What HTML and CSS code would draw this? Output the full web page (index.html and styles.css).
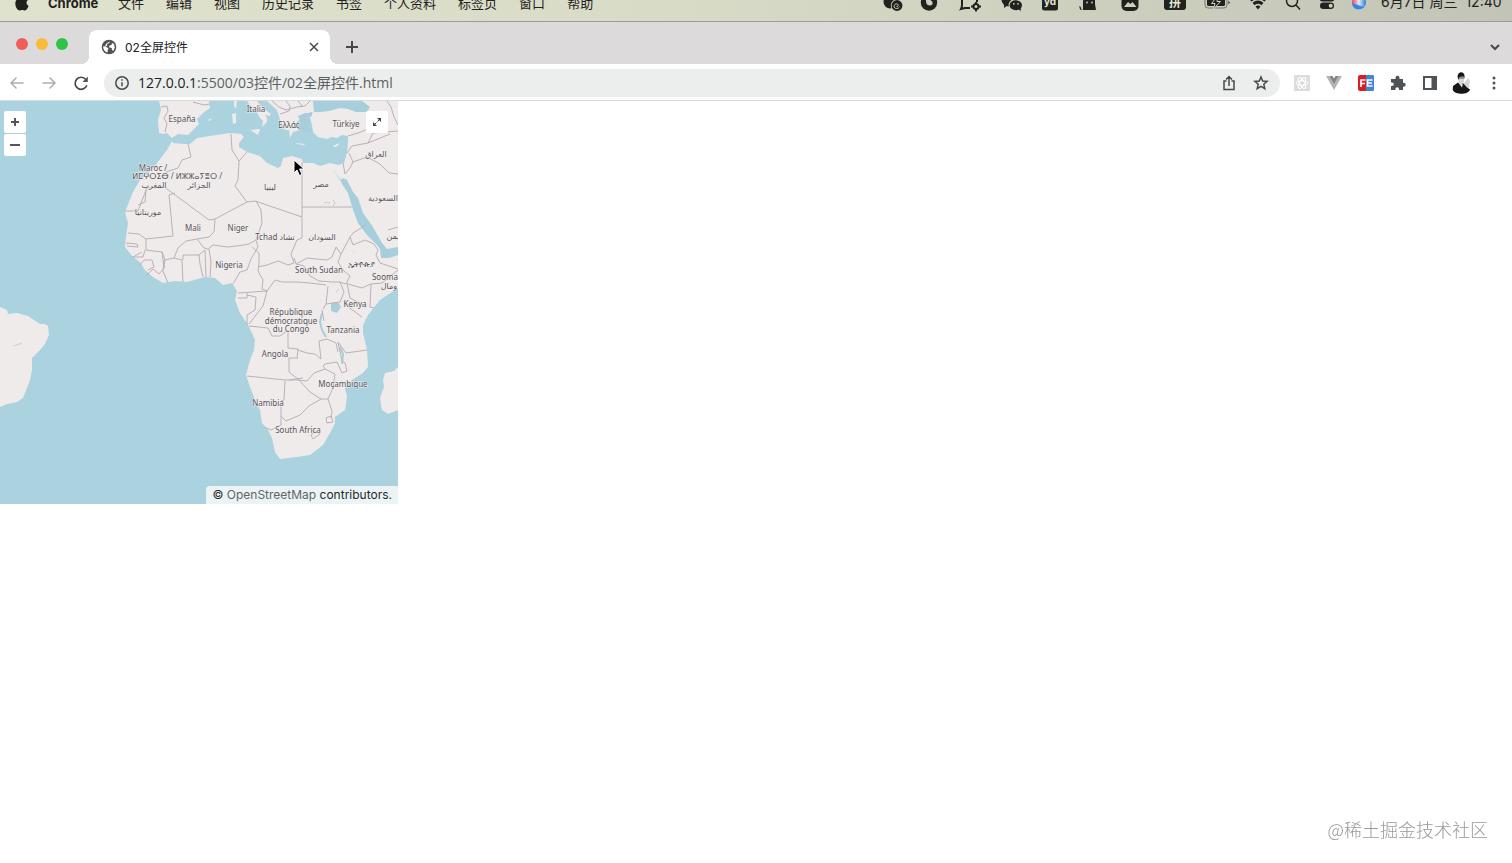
FILE: index.html
```html
<!DOCTYPE html>
<html lang="zh-CN">
<head>
<meta charset="utf-8">
<title>02全屏控件</title>
<link rel="stylesheet" href="styles.css">
</head>
<body>
<header class="menubar">
  <nav class="menus">
    <svg class="apple" viewBox="0 0 14 18" width="14" height="18"><path d="M9.500 0C9.600 2 8 3.800 6.600 3.700 6.400 2 8 .3 9.500 0zM12.800 6.200C11 7.300 11 10.700 13.600 11.800 12.800 14 11.500 16.500 9.900 16.500 8.900 16.500 8.400 15.900 7.200 15.900S5.500 16.500 4.500 16.500C2.500 16.500.3 12.800.3 9.500.3 6.200 2.300 4.500 4.300 4.500 5.500 4.500 6.300 5.200 7.200 5.200S9 4.400 10.400 4.500C11.300 4.500 12.200 5.200 12.800 6.200z"/></svg>
    <strong>Chrome</strong>
    <ul class="menu-items"><li>文件</li><li>编辑</li><li>视图</li><li>历史记录</li><li>书签</li><li>个人资料</li><li>标签页</li><li>窗口</li><li>帮助</li></ul>
  </nav>
  <div class="status">
    <div class="status-icons">
      <svg width="20" height="20" viewBox="0 0 20 20"><circle cx="7" cy="10" r="6.500"/><circle cx="14" cy="13.500" r="6.200" class="cut"/><circle cx="14" cy="13.500" r="5.400"/><path class="cutline" d="M13.500 14.500c1.500.5 2.500-1.500 1-2.300-2-1-4 1-3.300 3 .8 1.800 4 1.800 5.300-.2"/></svg>
      <svg width="20" height="20" viewBox="0 0 20 20"><circle cx="10" cy="10.500" r="8.200"/><path class="cut" d="M7 4v5c0 3 1.500 4.500 4 4.500s3.500-2 2-4L10 6.500z"/></svg>
      <svg width="22" height="20" viewBox="0 0 22 20"><path class="ink" d="M3 5v8q0 2-1 4l4-1h5M18 5v5"/><circle class="ink" cx="17" cy="14.500" r="2.500"/><path class="ink" d="M17 10v2M17 17v2.500M12 14.500h2.500M19.500 14.500H22"/></svg>
      <svg width="22" height="20" viewBox="0 0 22 20"><ellipse cx="8" cy="8" rx="7.500" ry="6.500"/><path d="M3 11l0 5 4-3z"/><ellipse class="cut" cx="14.500" cy="13" rx="7" ry="6"/><ellipse cx="14.800" cy="13.200" rx="6.200" ry="5"/><path d="M17 17l3 2-.5-4z"/><circle class="cut" cx="12.800" cy="11.800" r=".9"/><circle class="cut" cx="17" cy="11.800" r=".9"/></svg>
      <svg width="18" height="20" viewBox="0 0 18 20"><rect x="1" y="3" width="16" height="15.500" rx="2.500"/><text class="glyph" x="3" y="13">yd</text></svg>
      <svg width="20" height="20" viewBox="0 0 20 20"><path d="M5 18V9l1-4 3 3h5l3-3v7l1 6zM1 13c0 1.500 2 1 2 3s2 2 3 2H3c-2-1-1-3-2-5z"/><circle class="cut" cx="9" cy="10.500" r=".9"/><circle class="cut" cx="14" cy="10.500" r=".9"/></svg>
      <svg width="20" height="20" viewBox="0 0 20 20"><rect x="1.500" y="2" width="17" height="17" rx="5"/><path class="cut" d="M4 15l4-5 2.500 2 2-2 4 5z"/></svg>
      <svg width="22" height="20" viewBox="0 0 22 20"><rect x="0" y="2" width="22" height="16" rx="3"/><text class="glyph han" x="5" y="15">拼</text></svg>
      <svg width="26" height="20" viewBox="0 0 26 20"><rect class="ink faint" x="1" y="4.500" width="22" height="11.500" rx="3"/><rect x="3" y="6.500" width="18" height="7.500" rx="1.500"/><path d="M24.500 8.500v4l1.300-2z"/><path class="boltedge" d="M13.500 4L7.500 11.500h3.500L9.500 17l7-7.500h-3.500z"/></svg>
      <svg width="20" height="20" viewBox="0 0 20 20"><path class="ink thick" d="M2.500 8.500c4.500-4 10.500-4 15 0M5.500 12c3-2.500 6-2.500 9 0"/><path d="M10 17.500l-2.500-3c1.500-1.200 3.500-1.200 5 0z"/></svg>
      <svg width="18" height="20" viewBox="0 0 18 20"><circle class="ink slim" cx="8" cy="9" r="5.500"/><path class="ink slim" d="M12 13l4 4.500"/></svg>
      <svg width="18" height="20" viewBox="0 0 18 20"><rect class="ink" x="2.500" y="4" width="13" height="4.500" rx="2.200"/><rect x="2" y="10.500" width="14" height="6.500" rx="3.200"/><circle class="cut" cx="12.700" cy="13.800" r="2"/></svg>
      <svg width="16" height="20" viewBox="0 0 16 20"><defs><linearGradient id="siri" x1="0" y1="0" x2="1" y2="0"><stop offset="0" stop-color="#d6485e"/><stop offset=".5" stop-color="#e5e9fa"/><stop offset="1" stop-color="#257bd5"/></linearGradient></defs><circle cx="8" cy="10.500" r="7" fill="url(#siri)"/><path class="siriblue" d="M1.200 12c3-1 6 2 12 3-4 4-11 3-12-3z"/></svg>
    </div>
    <time>6月7日 周三&nbsp; 12:40</time>
  </div>
</header>

<div class="tabstrip">
  <div class="lights"><i class="red"></i><i class="amber"></i><i class="green"></i></div>
  <div class="tab">
    <svg width="16" height="16" viewBox="0 0 16 16"><circle cx="8" cy="8" r="7.300" fill="#505356"/><path fill="#fff" d="M9 2.200l-1 2-2 .7.300 1.600-2 1.200 1.700.5 1.600 1.500-1 1.300v2.300C4.500 13.500 2 11 2.200 7.300l1.300.2 1-1L5 5l1.700-1.200zM11 4l2 1 .8 3.500-1.500 3.500-1.300-1-.3-2-2.700-.7.500-1.800 2-.5z"/></svg>
    <span class="tab-title">02全屏控件</span>
    <button class="icon-btn small" aria-label="关闭标签页"><svg width="12" height="12" viewBox="0 0 12 12"><path class="line" d="M2 2l8 8M10 2l-8 8"/></svg></button>
  </div>
  <button class="icon-btn" aria-label="新标签页"><svg width="14" height="14" viewBox="0 0 14 14"><path class="line wide" d="M7 1v12M1 7h12"/></svg></button>
  <button class="icon-btn last" aria-label="搜索标签页"><svg width="12" height="12" viewBox="0 0 12 12"><path class="line wide" d="M2 4l4 4 4-4"/></svg></button>
</div>

<div class="toolbar">
  <div class="history">
    <button class="icon-btn" aria-label="后退"><svg width="16" height="16" viewBox="0 0 16 16"><path class="line pale" d="M14.500 8H2M7.500 2.500L2 8l5.500 5.500"/></svg></button>
    <button class="icon-btn" aria-label="前进"><svg width="16" height="16" viewBox="0 0 16 16"><path class="line pale" d="M1.500 8H14M8.500 2.500L14 8l-5.500 5.500"/></svg></button>
    <button class="icon-btn" aria-label="重新加载"><svg width="16" height="16" viewBox="0 0 16 16"><path class="line reload" d="M13.800 10.200A6 6 0 1 1 12.800 4.500"/><path d="M14.800 1.500v5.500H9.500z" fill="#505356"/></svg></button>
  </div>
  <div class="address">
    <svg width="16" height="16" viewBox="0 0 16 16"><circle class="line" cx="8" cy="8" r="6.200"/><path class="line" d="M8 7.300v4M8 4.300v1.500"/></svg>
    <div class="url"><b>127.0.0.1</b>:5500/03控件/02全屏控件.html</div>
    <button class="icon-btn" aria-label="分享"><svg width="16" height="16" viewBox="0 0 16 16"><path class="line" d="M5.500 6H3v8.500h10V6h-2.500M8 11V1.500M5 4.500l3-3 3 3"/></svg></button>
    <button class="icon-btn" aria-label="收藏"><svg width="16" height="16" viewBox="0 0 16 16"><path class="line" d="M8 2l1.700 4 4.400.4-3.300 2.900 1 4.300L8 11.300l-3.800 2.300 1-4.300-3.300-2.900 4.400-.4z"/></svg></button>
  </div>
  <div class="extensions">
    <button class="icon-btn" aria-label="React"><svg width="18" height="18" viewBox="0 0 18 18"><rect x="1" y="1" width="16" height="16" fill="#dcdcdc"/><g fill="none" stroke="#fff" stroke-width="1"><ellipse cx="9" cy="9" rx="6" ry="2.400"/><ellipse cx="9" cy="9" rx="6" ry="2.400" transform="rotate(60 9 9)"/><ellipse cx="9" cy="9" rx="6" ry="2.400" transform="rotate(120 9 9)"/></g></svg></button>
    <button class="icon-btn" aria-label="Vue"><svg width="18" height="18" viewBox="0 0 18 18"><path d="M1 2h4l4 7 4-7h4L9 16z" fill="#b4b4b4"/><path d="M4.500 2h3L9 4.500 10.500 2h3L9 10z" fill="#858585"/></svg></button>
    <button class="icon-btn" aria-label="FE 助手"><svg width="18" height="18" viewBox="0 0 18 18"><rect x="1" y="1" width="16" height="16" rx="2" fill="#d91f1d"/><path d="M9 1h6q2 0 2 2v12q0 2-2 2H9z" fill="#4285df"/><path d="M8.500 6H4v7M4 9.500h4M15.500 6h-5v6h5M10.500 9h4.500" fill="none" stroke="#fff" stroke-width="1.700"/></svg></button>
    <button class="icon-btn" aria-label="扩展程序"><svg width="18" height="18" viewBox="0 0 18 18"><path fill="#505356" d="M2 5h4.500V3.800a2 2 0 0 1 4 0V5H14v3.800h.7a2 2 0 0 1 0 4H14V16h-4v-1a1.800 1.800 0 0 0-3.600 0v1H2v-4h1a1.800 1.800 0 0 0 0-3.600H2z"/></svg></button>
    <button class="icon-btn" aria-label="侧边栏"><svg width="18" height="18" viewBox="0 0 18 18"><path fill="#505356" d="M2 2h14v14H2zm2 2v10h6.500V4z" fill-rule="evenodd"/></svg></button>
    <button class="icon-btn" aria-label="个人资料"><svg width="22" height="22" viewBox="0 0 22 22"><path fill="#d5d5d5" d="M13 11l4-5 2 3-1 7-4 2z"/><path fill="#d8d8d8" d="M7.500 3.500h5.500v6l-2 3H8.500l-1-4z"/><path fill="#171717" d="M6.500 5C6.500-1 13.500-1 13.500 4v3L12.500 4.500 8.500 5 7.500 8zM2 14l5-3.500 3 3 2-2.500 4 4.500 3 2c-1 5-14 6-17 1-.5-1 0-3 0-4.500z"/><path d="M7.500 6h5.500" stroke="#555"/><path fill="#eee" d="M8 11.500l2.500 1.500 1.500-1.500-1 4z"/></svg></button>
    <button class="icon-btn" aria-label="菜单"><svg width="18" height="18" viewBox="0 0 18 18" fill="#505356"><circle cx="9" cy="4" r="1.500"/><circle cx="9" cy="9" r="1.500"/><circle cx="9" cy="14" r="1.500"/></svg></button>
  </div>
</div>

<main>
  <section class="map">
    <svg class="world" viewBox="0 101 398 403" role="img" aria-label="地图">
      <g class="land">
        <path d="M159 101L161 110 158 120 159 133 163 134 167 133 172 138 178 134 188 135 195 128 199 124 197 119 203 113 210 108 209 101z"/>
        <path d="M247 101L252 108 257 112 260 118 263 121 262 127 267 122 267 118 265 115 269 116 271 114 264 109 257 101zM250 130L260 129 258 135zM232 114L236 113 236 123 233 124zM234 101L237 101 236 109 234 106zM208 120L212 118 210 121zM296 143L305 144 304 145 297 144zM333 146L339 143 338 146 334 147z"/>
        <path d="M267 101L277 110 280 120 285 130 289 130 290 138 293 132 300 130 296 123 302 117 308 115 310 112 313 112 310 118 312 125 313 132 318 137 327 139 332 137 337 138 342 135 348 136 348 142 347 153 344 163 338 165 330 163 320 166 313 163 303 163 302 159 292 156 283 158 281 166 278 168 267 163 260 156 247 152 244 150 239 147 239 143 244 137 241 134 230 133 210 136 197 138 190 144 184 144 173 143 172 141 167 150 157 163 152 170 140 180 133 192 127 207 125 212 128 223 126 237 125 247 133 257 140 262 145 270 153 277 163 283 175 281 187 282 205 277 215 278 223 285 232 283 237 291 235 300 240 313 248 325 252 333 255 340 254 350 250 360 246 375 250 387 255 400 260 410 262 423 268 430 272 438 275 452 280 459 297 457 310 455 323 445 330 433 335 423 335 417 345 410 347 397 345 388 352 380 363 373 368 367 367 350 363 333 363 325 368 315 380 300 398 288V101z"/>
        <path d="M398 367L394 371 385 373 383 380 384 387 380 398 382 410 388 414 398 410z"/>
        <path d="M0 307L7 310 8 314 17 313 28 316 34 320 40 324 45 324 48 326 49 335 45 344 40 350 32 358 32 370 30 380 27 388 23 398 17 402 7 404 0 407z"/>
      </g>
      <g class="water">
        <path d="M313 101L314 112 320 112 329 111 340 108 348 109 356 112 367 112 370 107 362 101zM298 116L305 113 312 113 312 116 305 117 311 122 308 125 312 131 304 132 298 127 301 123z"/>
        <path d="M333 170L340 180 344 187 348 193 353 210 358 223 367 235 377 245 380 249 381 258 389 258 398 255V247L387 249 382 243 373 227 363 213 358 198 353 192 347 180 343 178 341 180z"/>
        <path d="M331 303L338 302 341 307 337 313 331 311z"/>
        <path class="lake" d="M322 313L320 322 322 330 326 337M340 347L343 354 342 364"/>
      </g>
      <g class="borders">
        <path d="M161 107L167 106 168 111 164 118 167 124 165 132M193 102L204 105 210 104M188 144L191 157 182 160 178 168 166 172"/>
        <path d="M125 211H138L143 198 146 190 147 188H161M146 190L145 202 138 205M169 195L173 236 146 239 139 234 128 233M169 195L175 193M163 186L209 220 215 219 247 202 235 186 238 180 239 161 232 150 231 134"/>
        <path d="M239 161L247 152M247 202L256 201 258 202M215 219L214 232 209 237 197 239 186 241 178 248 174 258 165 260 162 252 146 250 146 239M197 239L204 248 208 249 213 245 228 247 244 245 249 244 256 240 262 223 261 210 256 201M258 202L302 217V162M302 207H352M302 217V238L297 240 291 254 294 263 288 265 278 261 267 265 258 267"/>
        <path d="M126 243L137 244 138 247 127 246M133 257L142 252M145 250L143 257 132 257M162 252L164 268 159 274 153 269 146 276M140 265L144 260 152 260 154 267 148 270M165 260L163 271 168 283M164 268L164 260M174 258L182 260 183 282M183 260V255L199 255 200 264 203 277M199 255L205 250 206 277M209 249L211 262 210 277M256 240L258 247 251 259 247 270 240 272 233 284M252 247L259 253 259 264 258 271 263 280 262 289 267 291 238 293M238 298H247V293M247 295L256 297 255 310 247 315 247 325"/>
        <path d="M294 258L296 264 304 266 310 276 319 281 332 282 340 282 346 284 350 276 343 270 338 262 341 254 336 247 332 257 327 260 307 258 296 264M341 254L350 237 353 233 366 225M350 237L353 245 365 240 374 244 378 250 376 255 380 263 398 269M348 284L355 286 362 288 371 284 382 283 398 270M371 284L370 307 374 308M347 283L350 298 367 307M340 282L344 292 340 302 326 304 323 309M326 304L328 286M267 291L275 280 282 282 297 282 310 283 326 285"/>
        <path d="M267 291L263 306 256 315 249 324M249 326L268 328 272 336 280 336 288 330 288 348 298 349 297 358M298 350L307 353 315 354 321 359 319 341 327 339 336 343 338 352M324 321L322 310M347 306L362 317M298 358H289V372L299 380 285 380 247 376"/>
        <path d="M285 381L284 400 281 401 281 425 271 430 264 427M281 416L286 421 300 415 309 406 321 399 328 399 333 388 335 374 325 369 314 373 307 381 299 380 310 392 321 399M289 380L303 378M325 369L323 366 325 364 337 362 342 373 347 371 345 363 342 361 338 342 346 353 367 350M328 399L332 411 331 418M331 416L326 418 327 423 333 422zM311 435L316 431 320 434 313 439z"/>
        <path d="M347 153L352 146 368 143 373 133 370 128 358 133 348 136M349 153L353 162 350 168 345 174 343 163M353 162L367 157 380 164 389 173 398 174M373 133L398 131M368 143L390 134M387 101L391 107 394 117 398 125M272 101L279 107 286 110 297 107 305 106 310 101M286 101L290 106 289 111 280 114M298 101L303 107M388 230L398 227"/>
        <path class="small" d="M324 203l3-1 3 1m3-3l2 3-2 3M14 346l8-3M353 252l1 1M336 292l3-3"/>
      </g>
      <g class="labels">
        <text x="182" y="122">España</text><text x="256" y="112">Italia</text><text x="289" y="128">Ελλάς</text><text x="346" y="127">Türkiye</text>
        <text x="153" y="171">Maroc /</text><text x="153" y="179">ⵍⵎⵖⵔⵉⴱ /</text><text x="154" y="188">المغرب</text><text x="199" y="179">ⵍⵣⵣⴰⵢⴻⵔ /</text><text x="199" y="188">الجزائر</text>
        <text x="148" y="215">موريتانيا</text><text x="193" y="231">Mali</text><text x="238" y="231">Niger</text><text x="270" y="190">ليبيا</text><text x="321" y="187">مصر</text><text x="376" y="157">العراق</text><text x="383" y="201">السعودية</text>
        <text x="275" y="240">Tchad تشاد</text><text x="322" y="240">السودان</text><text x="393" y="239">يمن</text><text x="229" y="268">Nigeria</text><text x="319" y="273">South Sudan</text><text x="361" y="267">ኢትዮጵያ</text><text x="385" y="280">Sooma</text><text x="389" y="289">ومال</text>
        <text x="291" y="315">République</text><text x="291" y="324">démocratique</text><text x="291" y="332">du Congo</text><text x="355" y="307">Kenya</text><text x="343" y="333">Tanzania</text><text x="275" y="357">Angola</text><text x="343" y="387">Moçambique</text><text x="268" y="406">Namibia</text><text x="298" y="433">South Africa</text>
      </g>
    </svg>
    <div class="zoom"><button aria-label="放大"><svg width="10" height="10" viewBox="0 0 10 10"><path d="M5 1v8M1 5h8"/></svg></button><button aria-label="缩小"><svg width="10" height="10" viewBox="0 0 10 10"><path d="M0 5h10"/></svg></button></div>
    <button class="fullscreen" aria-label="全屏"><svg width="10" height="10" viewBox="0 0 10 10"><path d="M5 1h4v4zM1 5v4h4z" fill="#444"/><path class="thin" d="M8.500 1.500l-3 3M4.500 5.500l-3 3"/></svg></button>
    <div class="attribution">© <a href="#">OpenStreetMap</a> contributors.</div>
    <svg class="cursor" width="12" height="18" viewBox="0 0 12 18"><path d="M1 1v13l3-3 2.500 5.500 2.500-1L6.500 10H11z" fill="#000" stroke="#fff"/></svg>
  </section>
</main>
<p class="watermark">@稀土掘金技术社区</p>
</body>
</html>
```
FILE: styles.css
```css
* { box-sizing: border-box; }
body {
  margin: 0;
  min-height: 100vh;
  background: #fff;
  color: #202124;
  font: 13px/20px Inter, "Noto Sans CJK SC", sans-serif;
}
button { border: 0; padding: 0; background: none; font: inherit; }
svg { display: block; flex: none; }

.menubar {
  display: flex;
  justify-content: space-between;
  height: 22px;
  overflow: hidden;
  padding: 0 12px 0 15px;
  background: linear-gradient(90deg, #dfe2cc, #d8dbc6 45%, #c2c4b7);
  border-bottom: 1px solid #9b9b98;
  color: #1f211c;
  white-space: nowrap;
}
.menus, .status { display: flex; align-items: center; height: 20px; margin-top: -7px; }
.menus strong { margin-left: 19px; width: 70px; }
.menu-items { display: flex; gap: 22px; margin: 0; padding: 0; list-style: none; }
.apple { fill: #1f211c; }
.status { gap: 10px; margin-top: -8px; }
.status-icons {
  display: grid;
  grid-template-columns: 36px 36px 46px 38px 38px 38px 46px 44px 40px 42px 28px 40px 24px;
  justify-items: center;
  fill: #20221d;
}
.status time { width: 119px; font-size: 14px; text-align: right; }
.cut { fill: #ced0c2; }
.cutline { fill: none; stroke: #ced0c2; }
.ink { fill: none; stroke: #20221d; stroke-width: 2; }
.ink.thick { stroke-width: 3; }
.ink.slim { stroke-width: 1.5; }
.ink.faint { stroke: #777970; stroke-width: 1; }
.boltedge { fill: #20221d; stroke: #ced0c2; }
.siriblue { fill: #3188e0; }
.glyph { fill: #e4e6da; font: bold 10px Inter, sans-serif; }
.glyph.han { font: bold 12px "Noto Sans CJK SC", sans-serif; }

.tabstrip {
  display: flex;
  align-items: center;
  height: 42px;
  padding: 8px 9px 0 16px;
  background: #dddadb;
}
.lights { display: flex; gap: 8px; width: 73px; margin-bottom: 6px; }
.lights i { width: 12px; height: 12px; border-radius: 50%; }
.red { background: #ee5f5a; }
.amber { background: #f8bb3a; }
.green { background: #30c446; }
.tab {
  position: relative;
  display: flex;
  align-items: center;
  gap: 8px;
  width: 241px;
  height: 34px;
  padding: 0 8px 0 12px;
  border-radius: 8px 8px 0 0;
  background: #fff;
  font-size: 12px;
}
.tab::before, .tab::after {
  content: "";
  position: absolute;
  bottom: 0;
  width: 8px;
  height: 8px;
}
.tab::before { right: 100%; background: radial-gradient(circle at 0 0, #dddadb 8px, #fff 8px); }
.tab::after { left: 100%; background: radial-gradient(circle at 100% 0, #dddadb 8px, #fff 8px); }
.tab-title { flex: 1; padding-top: 1px; }
.icon-btn { display: grid; place-items: center; flex: none; width: 24px; height: 24px; }
.icon-btn.small { width: 16px; }
.tab + .icon-btn { margin-left: 10px; }
.last { margin-left: auto; width: 16px; }
.line { fill: none; stroke: #46494c; stroke-width: 1.5; }
.line.wide { stroke-width: 2; }
.line.reload { stroke-width: 1.7; }
.line.pale { stroke: #acaeb0; }

.toolbar {
  display: flex;
  align-items: center;
  height: 37px;
  padding: 1px 6px 0 5px;
  border-bottom: 1px solid #d9dadb;
  background: #fff;
}
.history { display: flex; gap: 8px; width: 99px; }
.address {
  display: flex;
  align-items: center;
  flex: 1;
  height: 28px;
  padding: 0 7px 0 10px;
  border-radius: 14px;
  background: #ebeeed;
}
.url {
  flex: 1;
  margin-left: 8px;
  color: #5c5f62;
  font: 14px/20px "Open Sans", "Noto Sans CJK SC", sans-serif;
}
.url b { color: #202124; font-weight: 400; }
.address .icon-btn + .icon-btn { margin-left: 8px; }
.extensions { display: flex; gap: 8px; margin-left: 10px; }

.map { position: relative; width: 398px; overflow: hidden; background: #aad3df; }
.world { width: 100%; height: auto; }
.land { fill: #efebea; }
.water { fill: #a6cfdb; }
.lake { fill: none; stroke: #a6cfdb; stroke-width: 2; }
.borders { fill: none; stroke: #bcb0b8; stroke-width: 1; stroke-linejoin: round; }
.small { stroke: #c8cfcb; }
.labels {
  fill: #57535b;
  stroke: #f3f0ef;
  stroke-width: 1px;
  paint-order: stroke;
  font: 8px "Noto Sans", "DejaVu Sans", sans-serif;
  text-anchor: middle;
}
.zoom { position: absolute; top: 10px; left: 4px; display: grid; gap: 1px; }
.zoom button, .fullscreen {
  display: grid;
  place-items: center;
  width: 22px;
  height: 22px;
  border-radius: 2px;
  background: #fff;
}
.zoom path { stroke: #555; stroke-width: 2; }
.fullscreen { position: absolute; top: 10px; right: 10px; }
.thin { stroke: #444; }
.attribution {
  position: absolute;
  right: 0;
  bottom: 0;
  padding: 0 6px;
  border-radius: 4px 0 0;
  background: #ecf3f4;
  color: #26292b;
  font-size: 12px;
  line-height: 18px;
}
.attribution a { color: #606569; text-decoration: none; }
.cursor { position: absolute; left: 293px; top: 58px; }
.watermark {
  position: fixed;
  right: 24px;
  bottom: 22px;
  margin: 0;
  color: #999;
  font: 300 18px/24px "Noto Sans CJK SC", sans-serif;
}
```
